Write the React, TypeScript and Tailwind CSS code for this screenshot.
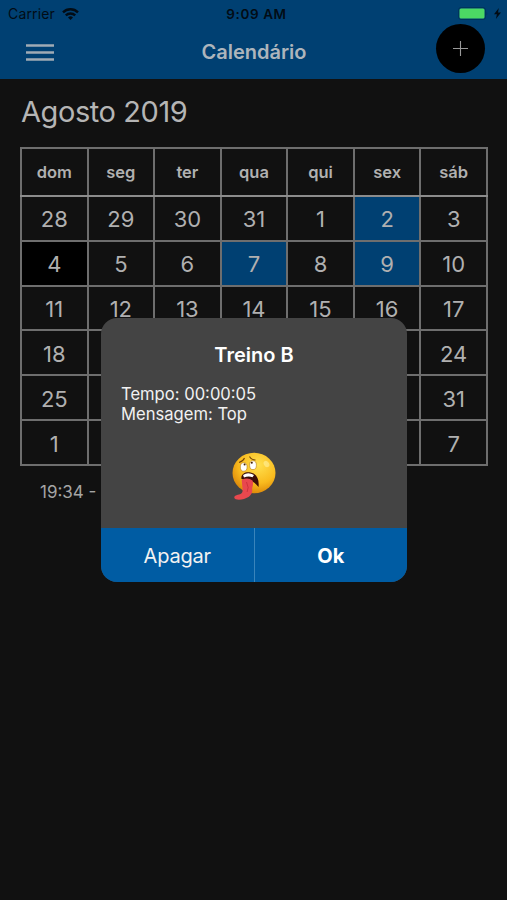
import React from "react";

interface Day {
  label: string;
  state?: "trained" | "today";
}

const WEEKDAYS = ["dom", "seg", "ter", "qua", "qui", "sex", "sáb"];

const WEEKS: Day[][] = [
  [{ label: "28" }, { label: "29" }, { label: "30" }, { label: "31" }, { label: "1" }, { label: "2", state: "trained" }, { label: "3" }],
  [{ label: "4", state: "today" }, { label: "5" }, { label: "6" }, { label: "7", state: "trained" }, { label: "8" }, { label: "9", state: "trained" }, { label: "10" }],
  [{ label: "11" }, { label: "12" }, { label: "13" }, { label: "14" }, { label: "15" }, { label: "16" }, { label: "17" }],
  [{ label: "18" }, { label: "19" }, { label: "20" }, { label: "21" }, { label: "22" }, { label: "23" }, { label: "24" }],
  [{ label: "25" }, { label: "26" }, { label: "27" }, { label: "28" }, { label: "29" }, { label: "30" }, { label: "31" }],
  [{ label: "1" }, { label: "2" }, { label: "3" }, { label: "4" }, { label: "5" }, { label: "6" }, { label: "7" }],
];

function dayBackground(state?: Day["state"]) {
  if (state === "trained") return "bg-[#004072]";
  if (state === "today") return "bg-black";
  return "bg-[#111111]";
}

function StatusBar() {
  return (
    <div className="grid h-7 grid-cols-3 items-center pl-2 pr-1.5 text-[14px] text-[#020c15]">
      <div className="flex items-center gap-[7px] pb-px">
        <span className="tracking-[0.15px]">Carrier</span>
        <svg width="17" height="12" viewBox="0 0 17 12" fill="none" stroke="currentColor" strokeWidth="2.4">
          <path d="M1 4.3a10.8 10.8 0 0 1 15 0" />
          <path d="M3.8 7.4a6.8 6.8 0 0 1 9.4 0" />
          <path d="M8.5 12 6 9.5a3.6 3.6 0 0 1 5 0z" fill="currentColor" stroke="none" />
        </svg>
      </div>
      <span className="pl-1 text-center text-[13.5px] font-semibold tracking-[0.6px]">9:09 AM</span>
      <div className="flex items-center justify-end gap-1.5 pb-px">
        <svg width="30" height="13" viewBox="0 0 30 13">
          <rect x="0.5" y="0.5" width="27" height="12" rx="2.5" fill="none" stroke="#00345c" />
          <rect x="1.5" y="1.5" width="25" height="10" rx="1.5" fill="#4cd964" />
          <path d="M28.5 4.5q1.5 2 0 4z" fill="#00345c" />
        </svg>
        <svg width="7" height="11" viewBox="0 0 7 11" fill="currentColor">
          <path d="M4.8 0 0 6.2h2.9L1.9 11 7 4.6H4z" />
        </svg>
      </div>
    </div>
  );
}

function Header() {
  return (
    <header className="relative h-[79px] bg-[#004072]">
      <StatusBar />
      <div className="flex h-12 items-center pl-[26px]">
        <button aria-label="Menu" className="w-7">
          <svg width="28" height="17" viewBox="0 0 28 17" stroke="#a0abb5" strokeWidth="2.4">
            <path d="M0 1.5h28M0 8.5h28M0 15.500h28" />
          </svg>
        </button>
        <h1 className="flex-1 pr-[53px] text-center text-[20px] font-semibold text-[#adb5bc]">Calendário</h1>
      </div>
      <button aria-label="Adicionar" className="absolute right-[22px] top-6 flex size-[49px] items-center justify-center rounded-full bg-black">
        <svg width="15" height="15" viewBox="0 0 15 15" stroke="#999999" strokeWidth="1.1">
          <path d="M7.5 0v15M0 7.5h15" />
        </svg>
      </button>
    </header>
  );
}

function Calendar() {
  return (
    <section className="pl-5 pr-[19px]">
      <h2 className="pl-px pt-[14px] text-[29px] leading-[38px] tracking-[-0.42px] text-[#b5b5b5]">Agosto 2019</h2>
      <table className="mt-4 h-[319px] w-[468px] table-fixed border-collapse text-[#b0b0b0]">
        <thead>
          <tr className="h-[48px]">
            {WEEKDAYS.map((day) => (
              <th key={day} className="border-2 border-[#6e6e6e] border-b-[#8c8c8c] p-0 text-[16.5px] font-semibold">
                {day}
              </th>
            ))}
          </tr>
        </thead>
        <tbody>
          {WEEKS.map((week, index) => (
            <tr key={index}>
              {week.map((day) => (
                <td key={day.label} className={`border-2 border-[#6e6e6e] px-0 pt-0.5 pb-0 text-center text-[22px] leading-none ${dayBackground(day.state)}`}>
                  {day.label}
                </td>
              ))}
            </tr>
          ))}
        </tbody>
      </table>
      <p className="pl-5 pt-[14px] text-[17px] leading-6 text-[#a5a5a5]">19:34 - </p>
    </section>
  );
}

function TiredFace() {
  return (
    <svg width="46" height="50" viewBox="0 0 46 50">
      <defs>
        <radialGradient id="face" cx="0.6" cy="0.3" r="0.75">
          <stop offset="0" stopColor="#ffe04f" />
          <stop offset="0.6" stopColor="#f9bb1e" />
          <stop offset="1" stopColor="#d98207" />
        </radialGradient>
      </defs>
      <ellipse cx="23" cy="21" rx="21.5" ry="20.3" fill="url(#face)" />
      <g fill="#fff" stroke="#b57a15" strokeWidth="0.6">
        <ellipse cx="12.7" cy="15" rx="3.4" ry="4.2" />
        <ellipse cx="22" cy="13.2" rx="3.4" ry="4.4" />
      </g>
      <circle cx="13.6" cy="12.6" r="1" fill="#432109" />
      <circle cx="20.8" cy="10.8" r="1" fill="#432109" />
      <path d="M8 10.5q4-1 5.5-4.5M18.5 4.5q2 3.5 6 3.5" fill="none" stroke="#754307" strokeWidth="1.1" />
      <path d="M10.5 27c-1-5 4-7.5 9-6.5 6 1 9 7 8 14.5-3-4-6-6-9-6z" fill="#3b0e08" />
      <path d="M12 23q5-3.5 11 0l-1.5 2.2q-4-1.5-8.5.3z" fill="#fff" />
      <path d="M10.7 28q6-3 10.8.5c1.500 4-.5 6-.3 9 .5 5-3.200 8-8.200 9.500-4 1.200-9.500 1-9.700-1.200-.2-2.300 3-2.800 5.700-3.500 4.500-1.300 2-7 1.700-14.300z" fill="#e9484e" />
      <path d="M15.5 30q3 6 .6 10" fill="none" stroke="#c52c37" strokeWidth="0.8" />
      <ellipse cx="35.5" cy="12" rx="2.5" ry="3.5" fill="#fff4a8" opacity="0.55" transform="rotate(-35 35.5 12)" />
    </svg>
  );
}

function WorkoutDialog() {
  return (
    <div role="dialog" className="absolute left-[101px] top-[318px] flex h-[264px] w-[306px] flex-col overflow-hidden rounded-[16px] bg-[#444444] text-[#f2f2f2]">
      <div className="flex flex-1 flex-col px-5 pt-[25px]">
        <h3 className="text-center text-[20px] font-semibold leading-6 text-white">Treino B</h3>
        <p className="mt-[18px] text-[16.6px] leading-[19.5px]">
          Tempo: 00:00:05
          <br />
          Mensagem: Top
        </p>
        <div className="flex justify-center pt-7">
          <TiredFace />
        </div>
      </div>
      <div className="flex h-[54px] bg-[#005ca3] text-[20px]">
        <button className="flex-1 border-r border-[#3984bb] pt-0.5 tracking-[-0.2px]">Apagar</button>
        <button className="flex-1 pt-0.5 font-bold text-white">Ok</button>
      </div>
    </div>
  );
}

export default function App() {
  return (
    <main className="relative h-[900px] w-[507px] overflow-hidden bg-[#111111] font-[Inter,sans-serif]">
      <Header />
      <Calendar />
      <WorkoutDialog />
    </main>
  );
}
